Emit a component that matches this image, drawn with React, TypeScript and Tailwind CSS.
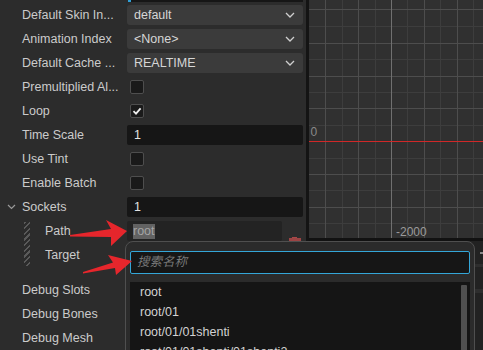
import React from "react";

const labelCls = "text-[12.5px] text-[#cbcbcb] whitespace-nowrap";

function Chevron() {
  return (
    <svg width="10" height="6" viewBox="0 0 10 6" className="shrink-0">
      <polyline points="1,1 5,5 9,1" fill="none" stroke="#cfcfcf" strokeWidth="1.3" />
    </svg>
  );
}

function Select({ value }: { value: string }) {
  return (
    <div className="w-[176px] h-[20px] rounded-[3px] bg-[#3b3b3b] flex items-center justify-between pl-[7px] pr-[8px]">
      <span className="text-[12.5px] text-[#d6d6d6]">{value}</span>
      <Chevron />
    </div>
  );
}

function Check({ on }: { on?: boolean }) {
  return (
    <div className="ml-[3px] w-[14px] h-[14px] rounded-[2px] border border-[#4e4e4e] bg-[#1a1a1a] flex items-center justify-center">
      {on && (
        <svg width="12" height="12" viewBox="0 0 12 12">
          <polyline points="2.5,6.2 5,8.6 9.6,3.4" fill="none" stroke="#eeeeee" strokeWidth="1.8" />
        </svg>
      )}
    </div>
  );
}

function NumInput({ value }: { value: string }) {
  return (
    <div className="w-[176px] h-[20px] rounded-[2px] bg-[#161616] flex items-center pl-[7px]">
      <span className="text-[12.5px] text-[#e2e2e2]">{value}</span>
    </div>
  );
}

function Row({ label, children }: { label: string; children?: React.ReactNode }) {
  return (
    <div className="h-[24px] flex items-center">
      <div className={`w-[127px] pl-[22px] ${labelCls}`}>{label}</div>
      {children}
    </div>
  );
}

// canvas grid, local coords (canvas starts at x=309)
const vMinor = [33, 66, 98, 131, 164];
const vMajor = [16, 49, 115, 148];
const hMinor = [26, 59, 92, 125, 158, 190, 223];
const hMajor = [9, 43, 76, 108, 174, 207];

function Grid() {
  return (
    <svg width="174" height="238" className="block">
      <rect width="174" height="238" fill="#303030" />
      {hMinor.map((y) => (
        <line key={"hm" + y} x1="0" x2="174" y1={y + 0.5} y2={y + 0.5} stroke="#3d3d3d" />
      ))}
      {vMinor.map((x) => (
        <line key={"vm" + x} y1="0" y2="238" x1={x + 0.5} x2={x + 0.5} stroke="#3d3d3d" />
      ))}
      {hMajor.map((y) => (
        <line key={"hM" + y} x1="0" x2="174" y1={y + 0.5} y2={y + 0.5} stroke="#4d4d4d" />
      ))}
      {vMajor.map((x) => (
        <line key={"vM" + x} y1="0" y2="238" x1={x + 0.5} x2={x + 0.5} stroke="#4d4d4d" />
      ))}
      <line x1="82.5" x2="82.5" y1="0" y2="238" stroke="#707070" />
      <line x1="0" x2="174" y1="141.5" y2="141.5" stroke="#d02828" />
      <text x="1.5" y="136" fontSize="12" fill="#8a8a8a" fontFamily="Liberation Sans, sans-serif">0</text>
      <text x="87" y="236" fontSize="12" fill="#9a9a9a" fontFamily="Liberation Sans, sans-serif">-2000</text>
    </svg>
  );
}

export default function App() {
  return (
    <div className="relative w-[483px] h-[350px] overflow-hidden flex bg-[#2c2c2c] font-['Liberation_Sans','Noto_Sans_CJK_SC',sans-serif]">
      {/* Inspector */}
      <div className="w-[306px] shrink-0 flex flex-col">
        <div className="h-[3px] pl-[128px]">
          <div className="h-[2px] w-[175px] bg-[#161616] flex">
            <div className="w-[3px] bg-[#2f9fd6]" />
          </div>
        </div>
        <Row label="Default Skin In..."><Select value="default" /></Row>
        <Row label="Animation Index"><Select value="<None>" /></Row>
        <Row label="Default Cache ..."><Select value="REALTIME" /></Row>
        <Row label="Premultiplied Al..."><Check /></Row>
        <Row label="Loop"><Check on /></Row>
        <Row label="Time Scale"><NumInput value="1" /></Row>
        <Row label="Use Tint"><Check /></Row>
        <Row label="Enable Batch"><Check /></Row>
        <div className="h-[24px] flex items-center">
          <div className="w-[22px] pl-[7px]">
            <svg width="9" height="6" viewBox="0 0 9 6" className="block">
              <polyline points="1,1 4.5,4.5 8,1" fill="none" stroke="#9a9a9a" strokeWidth="1.2" />
            </svg>
          </div>
          <div className={`w-[105px] ${labelCls}`}>Sockets</div>
          <NumInput value="1" />
        </div>
        <div className="flex mb-[11px]">
          <div className="ml-[24px] w-[6px] mt-[3px] mb-[1px] bg-[repeating-linear-gradient(135deg,#5a5a5a_0px,#5a5a5a_1.5px,transparent_1.5px,transparent_4px)]" />
          <div className="flex-1 flex flex-col">
            <div className="h-[24px] flex items-center">
              <div className={`w-[97px] pl-[15px] ${labelCls}`}>Path</div>
              <div className="w-[155px] h-[20px] rounded-[2px] bg-[#232323] flex items-center pl-[6px]">
                <span className="text-[12.5px] text-[#a4a4a4] bg-[#626262] leading-[15px]">root</span>
              </div>
              <svg width="12" height="4" viewBox="0 0 12 4" className="self-start mt-[18px] ml-[7px]">
                <rect x="3" y="0" width="5" height="1" fill="#a84848" />
                <rect x="0" y="1" width="12" height="3" fill="#9c4444" />
              </svg>
            </div>
            <div className="h-[24px] flex items-center">
              <div className={`w-[97px] pl-[15px] ${labelCls}`}>Target</div>
            </div>
          </div>
        </div>
        <Row label="Debug Slots" />
        <Row label="Debug Bones" />
        <Row label="Debug Mesh" />
      </div>

      <div className="w-[3px] shrink-0 bg-[#141414]" />

      {/* Scene view */}
      <div className="flex-1 flex flex-col">
        <Grid />
        <div className="h-[3px] bg-[#121212]" />
        <div className="flex-1 bg-[#222222] flex flex-col items-end pt-[11px]">
          <div className="w-[3px] h-[2px] bg-[#8a8a8a]" />
          <div className="mt-[10px] w-[8px] h-[3px] bg-[#2e2e2e]" />
          <div className="mt-[22px] w-[8px] h-[4px] bg-[#2e2e2e]" />
        </div>
      </div>

      {/* Node picker popup */}
      <div className="absolute left-[125px] top-[241px] w-[350px] h-[130px] rounded-t-[8px] border border-[#4f4f4f] bg-[#2b2b2b] pl-[4px] pt-[9px]">
        <div className="w-[340px] h-[23px] rounded-[2px] border border-[#34a6d8] bg-[#161616] flex items-center pl-[6px]">
          <span className="text-[12.5px] italic text-[#777777]">搜索名称</span>
        </div>
        <div className="mt-[8px] w-[340px] h-[90px] bg-[#151515] flex">
          <div className="flex-1 flex flex-col pl-[10px]">
            {["root", "root/01", "root/01/01shenti", "root/01/01shenti/01shenti2"].map((t) => (
              <div key={t} className="h-[20px] flex items-center text-[12.5px] text-[#d2d2d2] whitespace-nowrap">
                {t}
              </div>
            ))}
          </div>
          <div className="w-[6px] mt-[3px] mr-[3px] bg-[#505050] rounded-[1px]" />
        </div>
      </div>

      {/* Annotation arrows */}
      <svg width="483" height="350" className="absolute left-0 top-0 pointer-events-none">
        <polygon
          points="70,235 111,229 106,220 127,231 111,246 111,237 70,236.5"
          fill="#e6262c"
        />
        <polygon
          points="83,272 113,262.5 108,255 132,261 116,275 115,268 83,273.5"
          fill="#e6262c"
        />
      </svg>
    </div>
  );
}
